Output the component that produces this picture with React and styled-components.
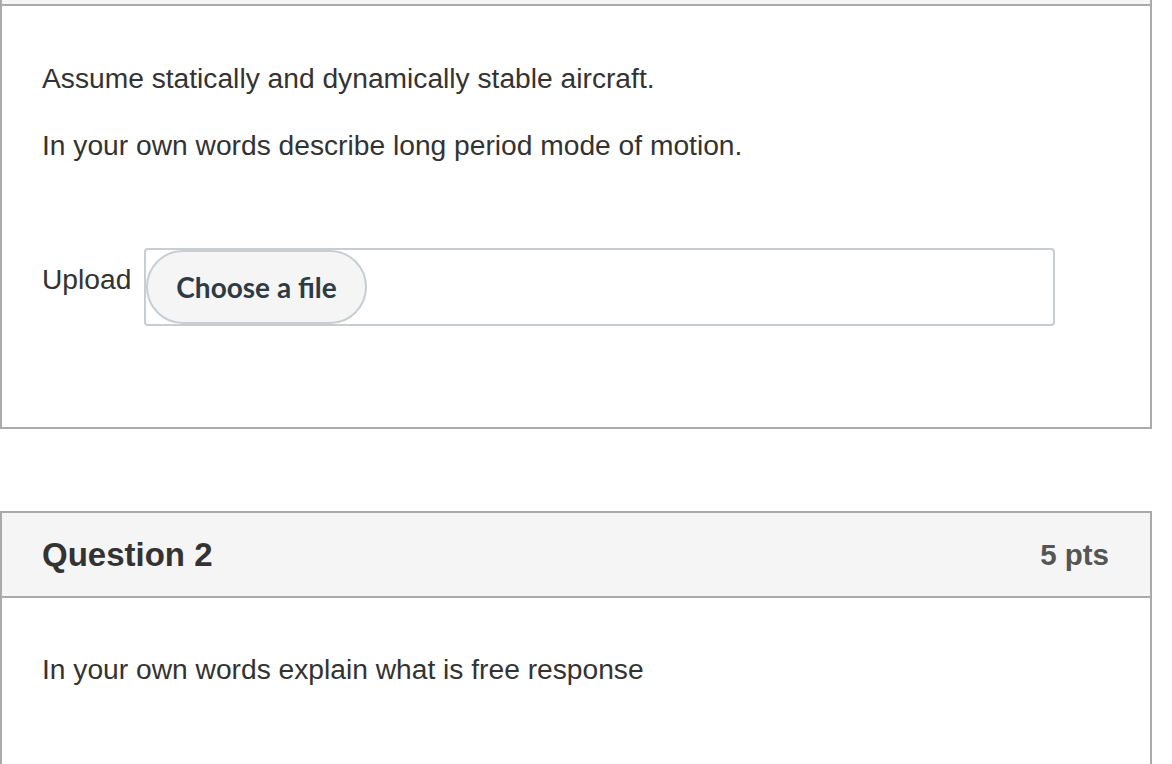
import React from "react";
import styled, { createGlobalStyle } from "styled-components";

const Global = createGlobalStyle`
  html, body { margin: 0; padding: 0; background: #ffffff; }
  body { font-family: "Liberation Sans", Arial, Helvetica, sans-serif; color: #333333; }
  * { box-sizing: border-box; }
`;

const Page = styled.div`
  width: 1172px;
  padding-right: 20px;
  display: flex;
  flex-direction: column;
  gap: 82px;
`;

const Card = styled.section`
  border: 2px solid #aaaaaa;
  border-top: ${(p) => (p.$clipped ? "none" : "2px solid #aaaaaa")};
  background: #ffffff;
`;

const HeaderStub = styled.div`
  height: 6px;
  background: #f5f5f5;
  border-bottom: 2px solid #aaaaaa;
`;

const Header = styled.header`
  height: 85px;
  display: flex;
  align-items: center;
  justify-content: space-between;
  padding: 0 41px 0 40px;
  background: #f5f5f5;
  border-bottom: 2px solid #aaaaaa;
`;

const Title = styled.h2`
  margin: 0;
  font-size: 33px;
  line-height: 40px;
  font-weight: 700;
  color: #333333;
`;

const Points = styled.span`
  font-size: 29.5px;
  line-height: 40px;
  font-weight: 700;
  color: #555555;
`;

const Body = styled.div`
  padding: ${(p) => p.$pad || "51px 40px 101px"};
  display: flex;
  flex-direction: column;
  gap: 25px;
`;

const Text = styled.p`
  margin: 0;
  font-size: 28.2px;
  line-height: 42px;
  color: #333333;
`;

const UploadRow = styled.div`
  margin-top: 57px;
  display: flex;
  align-items: flex-start;
  gap: 13px;
`;

const Label = styled.label`
  margin-top: 10px;
  font-size: 28.2px;
  line-height: 42px;
  color: #333333;
`;

const FileBox = styled.div`
  width: 911px;
  height: 78px;
  border: 2px solid #c7cdd1;
  border-radius: 4px;
  display: flex;
  align-items: center;
`;

const FileButton = styled.button`
  height: 74px;
  padding: 0 28px;
  border: 2px solid #c7cdd1;
  border-radius: 37px;
  background: #f5f5f5;
  font-family: Lato, "Liberation Sans", sans-serif;
  font-weight: 700;
  font-size: 28px;
  color: #2d3b45;
  cursor: pointer;
`;

export default function App() {
  return (
    <>
      <Global />
      <Page>
        <Card $clipped>
          <HeaderStub />
          <Body>
            <Text>Assume statically and dynamically stable aircraft.</Text>
            <Text>In your own words describe long period mode of motion.</Text>
            <UploadRow>
              <Label>Upload</Label>
              <FileBox>
                <FileButton type="button">Choose a file</FileButton>
              </FileBox>
            </UploadRow>
          </Body>
        </Card>
        <Card>
          <Header>
            <Title>Question 2</Title>
            <Points>5 pts</Points>
          </Header>
          <Body $pad="50px 40px 120px">
            <Text>In your own words explain what is free response</Text>
          </Body>
        </Card>
      </Page>
    </>
  );
}
